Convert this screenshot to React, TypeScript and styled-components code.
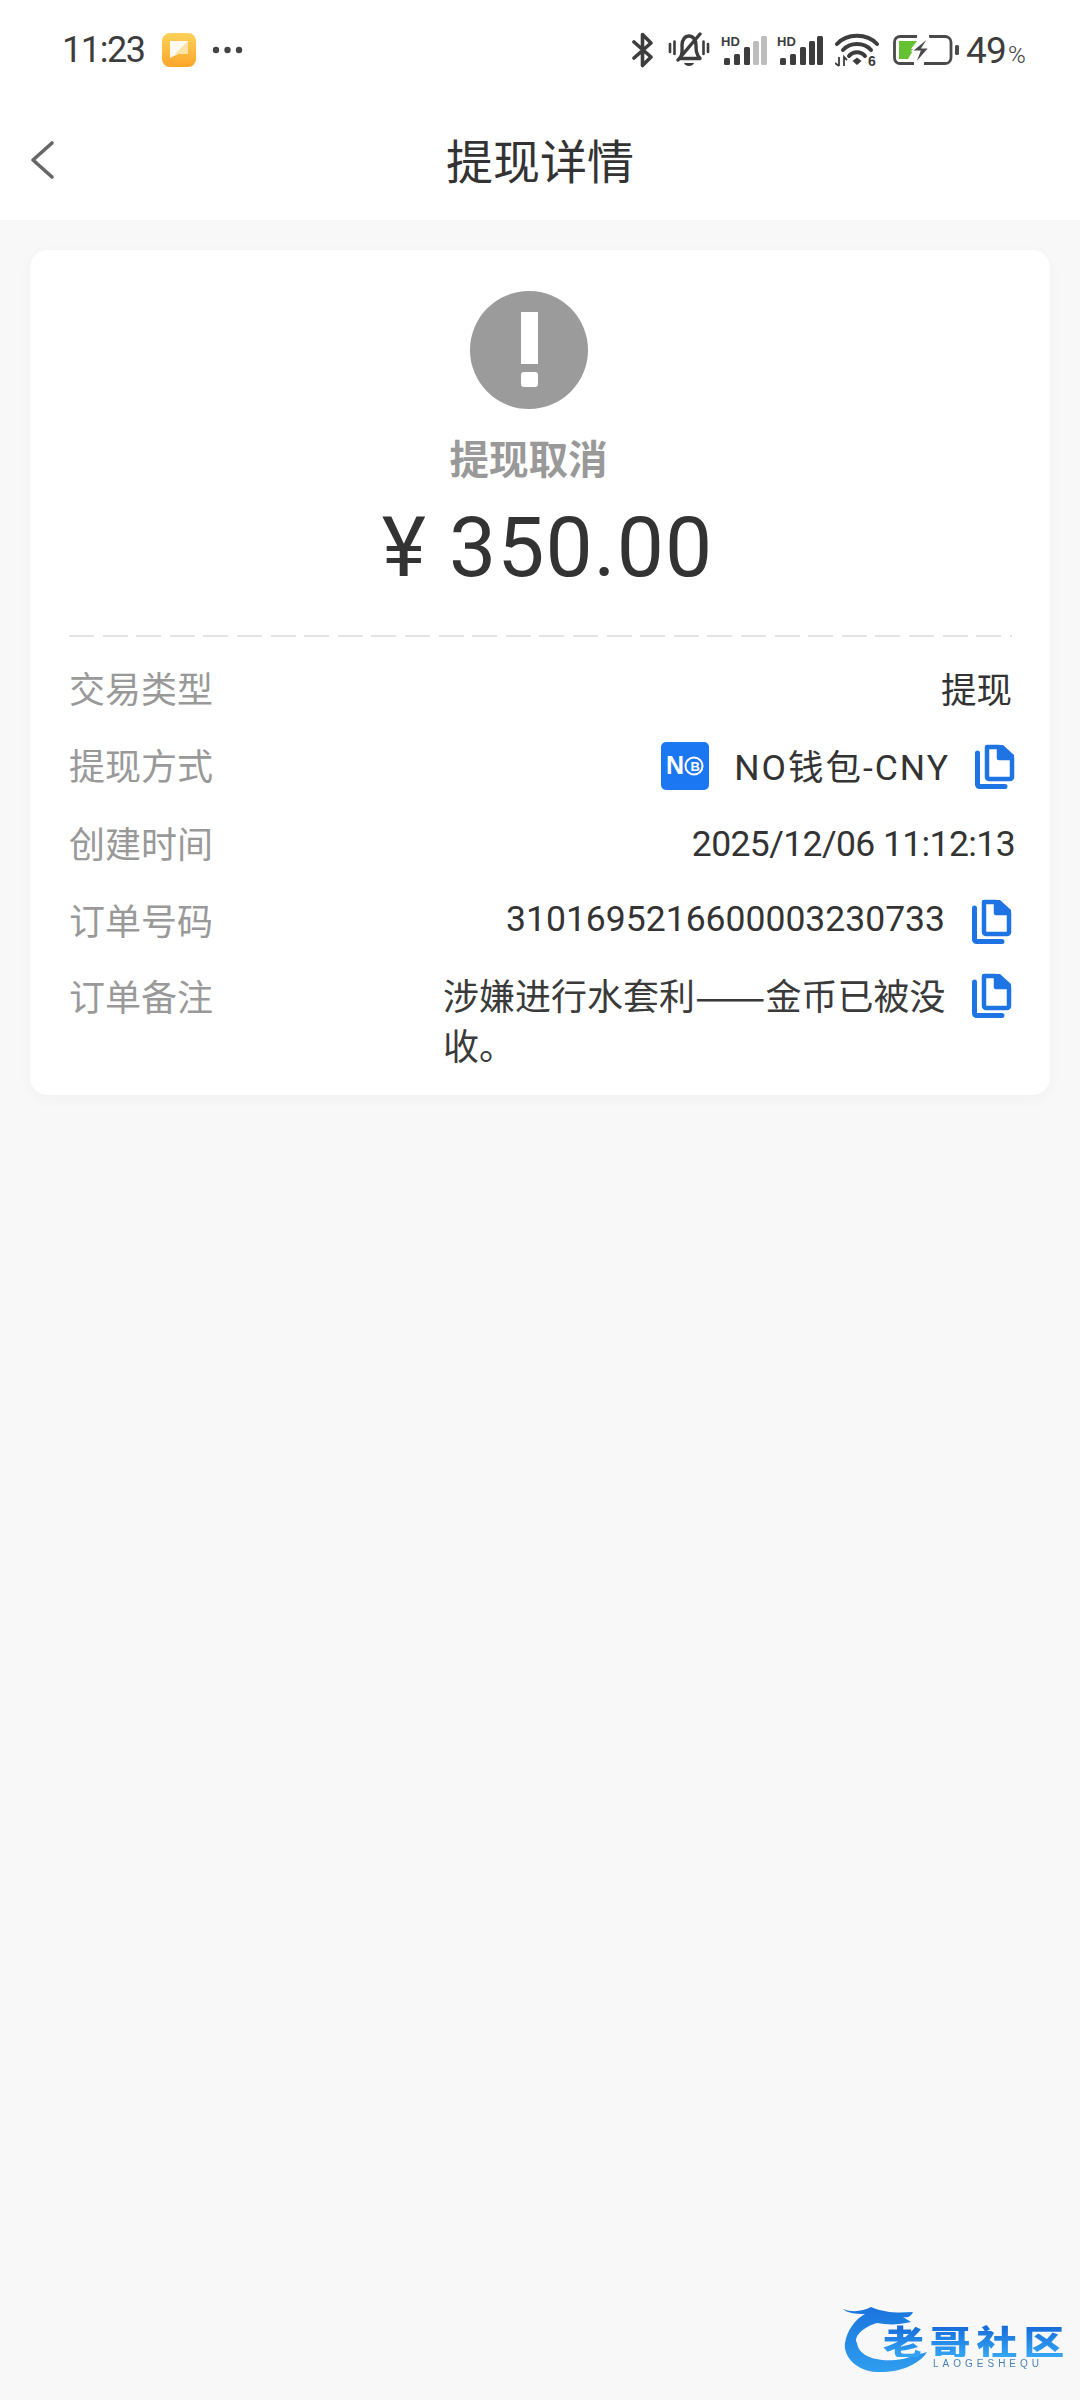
import React from "react";
import styled, { createGlobalStyle } from "styled-components";

const Global = createGlobalStyle`
  html, body { margin: 0; padding: 0; background: #f8f8f8; }
  body { font-family: Roboto, "Noto Sans CJK SC", sans-serif; }
  * { box-sizing: border-box; }
`;
const Page = styled.div`
  position: relative;
  width: 1080px;
  height: 2400px;
  background: #f8f8f8;
  overflow: hidden;
  color: #333;
`;
const TopArea = styled.header`
  background: #fff;
  height: 220px;
  display: flex;
  flex-direction: column;
`;
const StatusBar = styled.div`
  height: 100px;
  display: flex;
  align-items: center;
  justify-content: space-between;
  padding: 0 55px 0 62px;
`;
const StatusGroup = styled.div`
  display: flex;
  align-items: center;
`;
const Time = styled.span`
  font-size: 36px;
  line-height: 1;
  letter-spacing: -1.4px;
  color: #3d3d3d;
  width: 100px;
`;
const Dots = styled.svg`
  margin-left: 16px;
`;
const Percent = styled.span`
  margin-left: 7px;
  font-size: 37px;
  line-height: 1;
  letter-spacing: -0.8px;
  color: #3d3d3d;
  small { font-size: 24px; margin-left: 2px; font-weight: 300; }
`;
const IconSlot = styled.svg<{ $ml: number }>`
  margin-left: ${(p) => p.$ml}px;
  display: block;
`;
const Nav = styled.nav`
  position: relative;
  flex: 1;
  display: flex;
  align-items: center;
  justify-content: center;
`;
const Back = styled.svg`
  position: absolute;
  left: 28px;
  top: 40px;
`;
const Title = styled.h1`
  margin: 0 0 2px;
  font-size: 47px;
  line-height: 60px;
  font-weight: 400;
  color: #333;
  font-family: "Noto Sans CJK SC", sans-serif;
`;
const Card = styled.section`
  margin: 30px 30px 0;
  height: 845px;
  background: #fff;
  border-radius: 18px;
  box-shadow: 0 4px 16px rgba(0, 0, 0, 0.03);
  padding: 41px 38px 0 39px;
  display: flex;
  flex-direction: column;
`;
const Hero = styled.div`
  height: 344px;
  display: flex;
  flex-direction: column;
  align-items: center;
`;
const StatusBlock = styled.div`
  display: flex;
  flex-direction: column;
  align-items: center;
  margin-right: 24px;
`;
const StatusTitle = styled.div`
  margin-top: 23px;
  font-size: 39.5px;
  line-height: 50px;
  font-weight: 700;
  color: #999;
  font-family: "Noto Sans CJK SC", sans-serif;
`;
const Amount = styled.div`
  margin: 18px 0 0 14px;
  font-size: 84px;
  line-height: 96px;
  letter-spacing: 1px;
  color: #333;
  display: flex;
  align-items: baseline;
  gap: 22px;
`;
const Dash = styled.div`
  height: 2px;
  flex: none;
  background: repeating-linear-gradient(to right, #e4e4e4 0 25px, transparent 25px 33.6px);
`;
const Rows = styled.div`
  padding-top: 14px;
  display: flex;
  flex-direction: column;
`;
const Row = styled.div<{ $h: number }>`
  min-height: ${(p) => p.$h}px;
  display: flex;
  justify-content: space-between;
  align-items: flex-start;
`;
const Label = styled.span`
  font-size: 36px;
  line-height: 72px;
  color: #999;
  font-family: "Noto Sans CJK SC", sans-serif;
  font-weight: 400;
`;
const Value = styled.div<{ $mr?: number }>`
  display: flex;
  align-items: center;
  height: 76px;
  margin-right: ${(p) => -(p.$mr ?? 0)}px;
  font-size: 35.5px;
  color: #333;
  font-family: Roboto, "Noto Sans CJK SC", sans-serif;
`;
const ValueText = styled.span<{ $ls?: number }>`
  padding-bottom: 4px;
  letter-spacing: ${(p) => p.$ls ?? 0}px;
`;
const DateText = styled.span`
  letter-spacing: -0.6px;
`;
const WalletLogo = styled.svg`
  margin-right: 25px;
  flex: none;
`;
const CopyIcon = styled.svg<{ $ml: number }>`
  margin-left: ${(p) => p.$ml}px;
  flex: none;
`;
const Remark = styled.div`
  display: flex;
  align-items: flex-start;
  width: 569px;
  padding-top: 13px;
`;
const RemarkText = styled.p`
  margin: -3px 0 0;
  flex: 1;
  font-size: 36px;
  line-height: 50px;
  font-family: "Noto Sans CJK SC", sans-serif;
  font-weight: 400;
  color: #3a3a3a;
`;
const Dashes = styled.span`
  font-size: 42px;
  line-height: 0;
  vertical-align: -2px;
`;
const Watermark = styled.div`
  position: absolute;
  left: 843px;
  top: 2305px;
  width: 226px;
  height: 72px;
  filter: blur(0.6px);
`;
const Dragon = styled.svg`
  position: absolute;
  left: 0;
  top: 0;
`;
const WmTitle = styled.div`
  position: absolute;
  left: 40px;
  top: 20px;
  font-family: "Noto Sans CJK SC", sans-serif;
  font-size: 34px;
  line-height: 32px;
  font-weight: 900;
  letter-spacing: 5px;
  white-space: nowrap;
  transform: scaleX(1.2);
  transform-origin: left center;
  background: linear-gradient(#1569d8, #35a7f5);
  -webkit-background-clip: text;
  background-clip: text;
  color: transparent;
`;
const WmSub = styled.div`
  position: absolute;
  left: 90px;
  top: 53px;
  font-family: "Liberation Sans", sans-serif;
  font-size: 10px;
  line-height: 12px;
  letter-spacing: 4px;
  color: #4a7fb5;
  white-space: nowrap;
`;

const Copy = ({ ml }: { ml: number }) => (
  <CopyIcon $ml={ml} width="40" height="46" viewBox="0 0 40 46" fill="none">
    <path d="M2.5 10V41.5a2 2 0 0 0 2 2H30" stroke="#1f74e4" strokeWidth="5" strokeLinecap="round" />
    <path d="M12 4H24V15H37V34a2 2 0 0 1-2 2H14a2 2 0 0 1-2-2V4Z" stroke="#1f74e4" strokeWidth="4.5" strokeLinejoin="round" />
    <path d="M24 2H28L39 12V17H24V2Z" fill="#1f74e4" />
  </CopyIcon>
);
const Signal = ({ dim }: { dim?: boolean }) => (
  <IconSlot $ml={dim ? 11 : 10} width="46" height="30" viewBox="0 0 46 30">
    <text x="0" y="10.5" fontFamily="Liberation Sans, sans-serif" fontWeight="700" fontSize="13" fill="#3d3d3d">HD</text>
    <rect x="3" y="23" width="6" height="7" rx="1.5" fill="#3d3d3d" />
    <rect x="13" y="19" width="6" height="11" rx="1.5" fill="#3d3d3d" />
    <rect x="23" y="12" width="6" height="18" rx="1.5" fill="#3d3d3d" />
    <rect x="32" y="6" width="6" height="24" rx="1.5" fill={dim ? "#bdbdbd" : "#3d3d3d"} />
    <rect x="40" y="1" width="6" height="29" rx="1.5" fill={dim ? "#bdbdbd" : "#3d3d3d"} />
  </IconSlot>
);

export default function App() {
  return (
    <Page>
      <Global />
      <TopArea>
        <StatusBar>
          <StatusGroup>
            <Time>11:23</Time>
            <svg width="34" height="34" viewBox="0 0 34 34">
              <defs>
                <linearGradient id="g1" x1="0" y1="0" x2="0" y2="1">
                  <stop offset="0" stopColor="#fdd25a" />
                  <stop offset="1" stopColor="#fda52a" />
                </linearGradient>
              </defs>
              <rect width="34" height="34" rx="8" fill="url(#g1)" />
              <path d="M8 8H26V19L20 19L8 25Z" fill="#fff" opacity="0.92" />
              <path d="M26 8V21H13Z" fill="#fde3a8" />
            </svg>
            <Dots width="31" height="8" viewBox="0 0 31 8">
              <circle cx="4" cy="4" r="3.2" fill="#444" />
              <circle cx="15.5" cy="4" r="3.2" fill="#444" />
              <circle cx="27" cy="4" r="3.2" fill="#444" />
            </Dots>
          </StatusGroup>
          <StatusGroup>
            <svg width="22" height="36" viewBox="0 0 22 36" fill="none">
              <path d="M2 10L19 25L10.5 33.5V2.5L19 11L2 26" stroke="#3d3d3d" strokeWidth="3.6" strokeLinejoin="round" strokeLinecap="round" />
            </svg>
            <IconSlot $ml={14} width="42" height="36" viewBox="0 0 42 36" fill="none">
              <path d="M2 12V20M6.5 9.5V22M35.5 9.5V22M40 12V20" stroke="#3d3d3d" strokeWidth="2.6" strokeLinecap="round" />
              <path d="M13 25C15 20 14 16 14 13C14 8 17 4 21 4C25 4 28 8 28 13C28 18 28 22 32 26.5H11" stroke="#3d3d3d" strokeWidth="3.4" strokeLinejoin="round" />
              <path d="M10 28L32 2" stroke="#3d3d3d" strokeWidth="3.4" strokeLinecap="round" />
              <path d="M16 31H26C25 35 17 35 16 31Z" fill="#3d3d3d" />
            </IconSlot>
            <Signal dim />
            <Signal />
            <IconSlot $ml={12} width="44" height="34" viewBox="0 0 44 34" fill="none">
              <path d="M2 11C12 0 32 0 42 11" stroke="#3d3d3d" strokeWidth="4" strokeLinecap="round" />
              <path d="M8 17C15 9 29 9 36 17" stroke="#3d3d3d" strokeWidth="4" strokeLinecap="round" />
              <path d="M14 23C18 18 26 18 30 23" stroke="#3d3d3d" strokeWidth="4" strokeLinecap="round" />
              <path d="M17.5 28L22 24.5L26.5 28L22 32Z" fill="#3d3d3d" />
              <path d="M4 24V33M0 30L4 33M9 33V24L12 27" stroke="#3d3d3d" strokeWidth="1.8" />
              <text x="33" y="33" fontFamily="Liberation Sans, sans-serif" fontSize="14" fontWeight="700" fill="#3d3d3d">6</text>
            </IconSlot>
            <IconSlot $ml={14} width="66" height="30" viewBox="0 0 66 30" fill="none">
              <path d="M24 1.5H7A5.5 5.5 0 0 0 1.5 7V23A5.5 5.5 0 0 0 7 28.5H21" stroke="#4a4a4a" strokeWidth="2.8" />
              <path d="M36 1.5H52A6 6 0 0 1 58 7V23A6 6 0 0 1 52 28.5H31" stroke="#4a4a4a" strokeWidth="2.8" />
              <path d="M6 6H24L18 14H21L15 24H6Z" fill="#63c132" />
              <path d="M36 2L19 16H27L22 29L36 13H29Z" fill="#4a4a4a" stroke="#fff" strokeWidth="1.2" />
              <rect x="62" y="10" width="4" height="10" rx="1.5" fill="#4a4a4a" />
            </IconSlot>
            <Percent>49<small>%</small></Percent>
          </StatusGroup>
        </StatusBar>
        <Nav>
          <Back width="28" height="40" viewBox="0 0 28 40" fill="none">
            <path d="M24 3L5 20L24 37" stroke="#666" strokeWidth="3.6" strokeLinecap="round" strokeLinejoin="round" />
          </Back>
          <Title>提现详情</Title>
        </Nav>
      </TopArea>
      <Card>
        <Hero>
          <StatusBlock>
            <svg width="118" height="118" viewBox="0 0 118 118">
              <circle cx="59" cy="59" r="59" fill="#9b9b9b" />
              <rect x="51" y="21" width="17" height="52" fill="#fff" />
              <rect x="51" y="81" width="17" height="15" rx="3" fill="#fff" />
            </svg>
            <StatusTitle>提现取消</StatusTitle>
          </StatusBlock>
          <Amount><span>¥</span><span>350.00</span></Amount>
        </Hero>
        <Dash />
        <Rows>
          <Row $h={77}>
            <Label>交易类型</Label>
            <Value><ValueText>提现</ValueText></Value>
          </Row>
          <Row $h={78}>
            <Label>提现方式</Label>
            <Value $mr={3}>
              <WalletLogo width="48" height="48" viewBox="0 0 48 48">
                <rect width="48" height="48" rx="5" fill="#1c78f2" />
                <text x="5" y="32" fontFamily="Liberation Sans, sans-serif" fontWeight="700" fontSize="25" fill="#fff">N</text>
                <circle cx="33" cy="24" r="8.5" fill="none" stroke="#fff" strokeWidth="2" />
                <text x="29.5" y="29" fontFamily="Liberation Sans, sans-serif" fontWeight="700" fontSize="13" fill="#fff">B</text>
              </WalletLogo>
              <ValueText $ls={2}>NO钱包-CNY</ValueText>
              <Copy ml={25} />
            </Value>
          </Row>
          <Row $h={77}>
            <Label>创建时间</Label>
            <Value $mr={3}><DateText>2025/12/06 11:12:13</DateText></Value>
          </Row>
          <Row $h={75}>
            <Label>订单号码</Label>
            <Value>
              <ValueText>3101695216600003230733</ValueText>
              <Copy ml={27} />
            </Value>
          </Row>
          <Row $h={100}>
            <Label>订单备注</Label>
            <Remark>
              <RemarkText>涉嫌进行水套利<Dashes>——</Dashes>金币已被没收。</RemarkText>
              <Copy ml={25} />
            </Remark>
          </Row>
        </Rows>
      </Card>
      <Watermark>
        <Dragon width="90" height="72" viewBox="0 0 90 72" fill="none">
          <defs>
            <linearGradient id="g2" x1="0" y1="0" x2="0" y2="1">
              <stop offset="0" stopColor="#1a74dc" />
              <stop offset="1" stopColor="#2f9ef0" />
            </linearGradient>
          </defs>
          <path d="M0 4C10 8 20 6 28 2C42 8 55 8 70 7C68 11 66 13 60 12L68 17C55 20 45 20 34 18C20 22 10 32 14 38C16 52 35 58 60 54L84 47C76 60 55 68 34 67C12 66 0 50 2 38C4 26 12 14 22 9C12 9 4 8 0 4Z" fill="url(#g2)" />
        </Dragon>
        <WmTitle>老哥社区</WmTitle>
        <WmSub>LAOGESHEQU</WmSub>
      </Watermark>
    </Page>
  );
}
